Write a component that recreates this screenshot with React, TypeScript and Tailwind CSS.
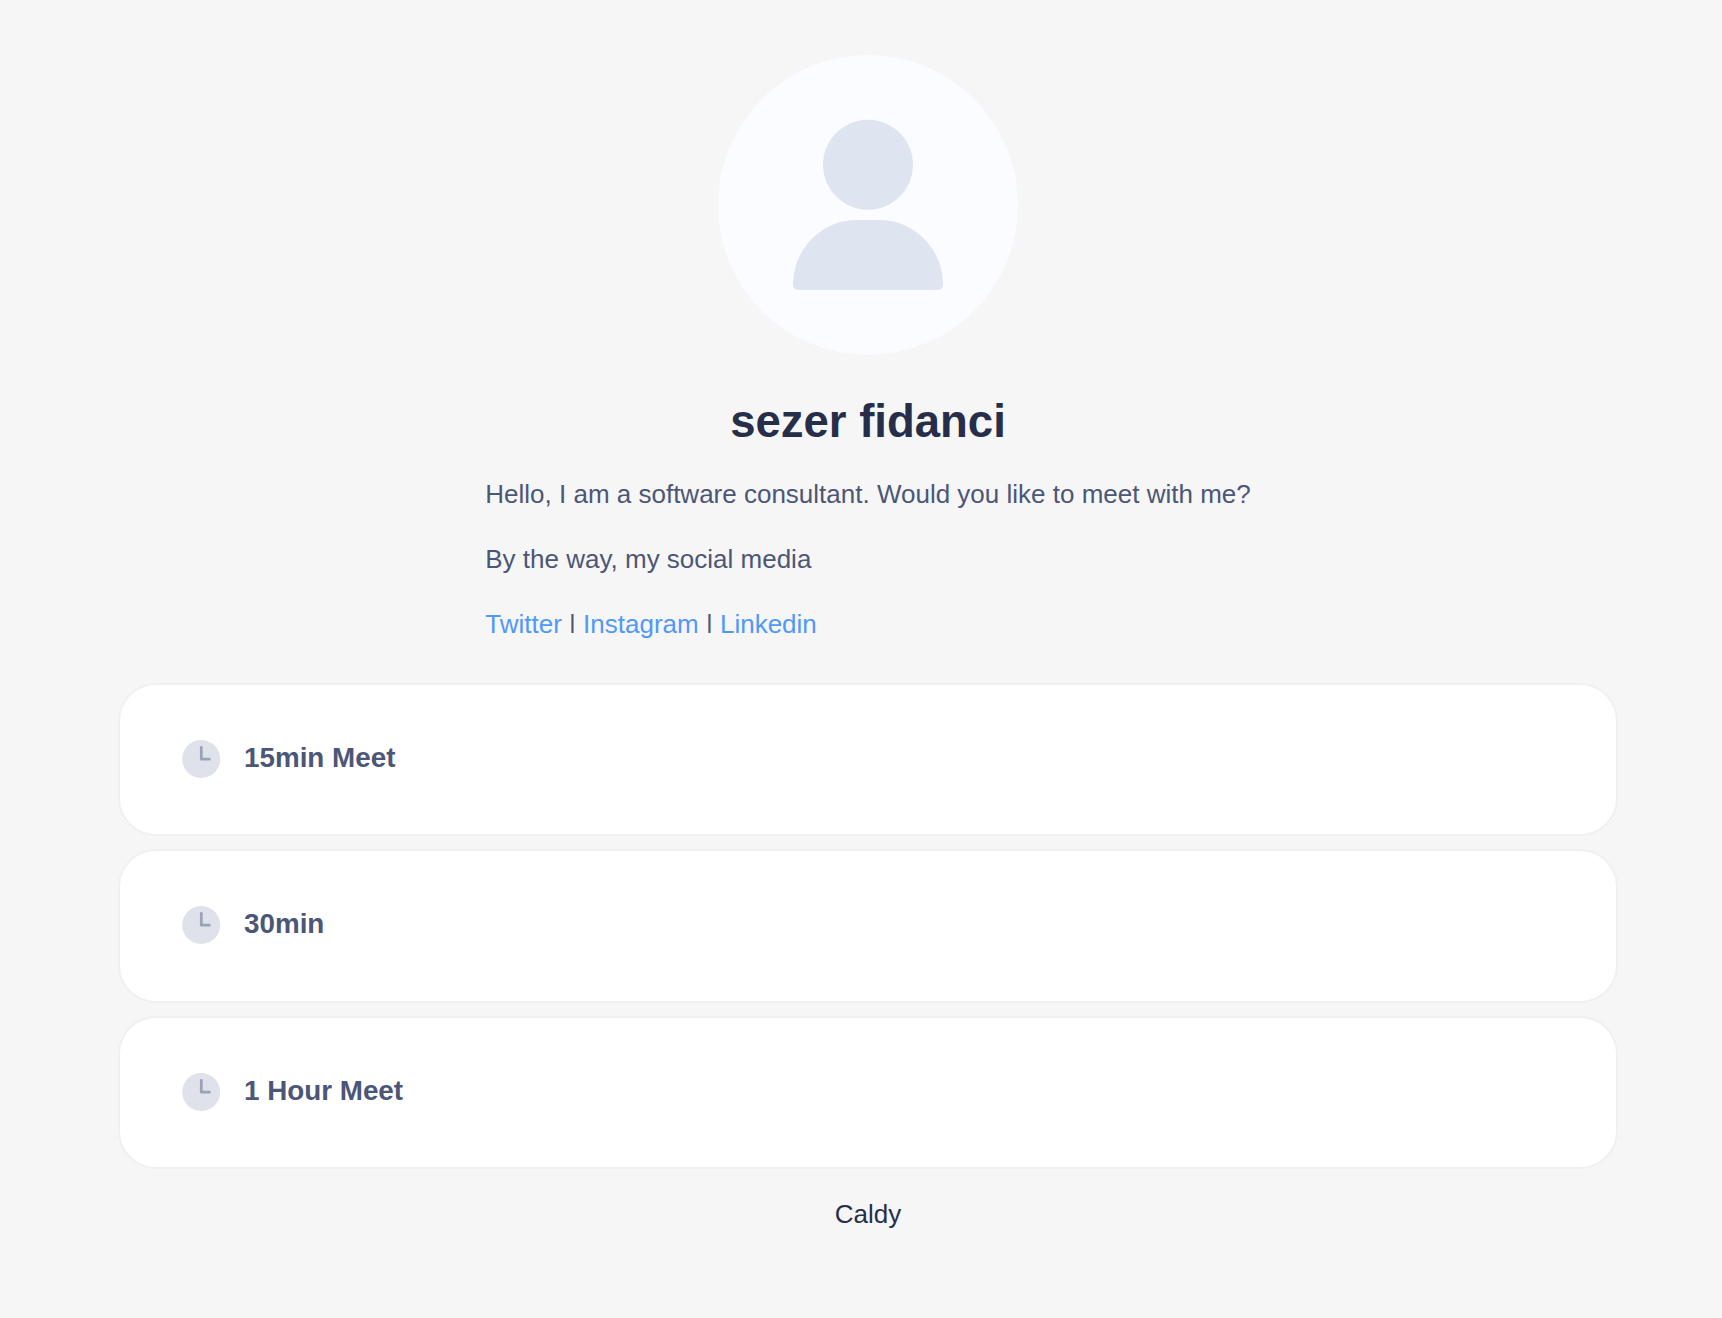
const meetings = [
  { id: 1, title: '15min Meet' },
  { id: 2, title: '30min' },
  { id: 3, title: '1 Hour Meet' },
];

const Avatar = () => {
  return (
    <svg width="300" height="300" viewBox="0 0 300 300" className="block">
      <circle cx="150" cy="150" r="150" fill="#fafcff" />
      <circle cx="150" cy="109.800" r="45" fill="#dee4f0" />
      <path
        d="M75 230C75 193.500 104.500 165 138 165H162C195.500 165 225 193.500 225 230A5 5 0 0 1 220 235H80A5 5 0 0 1 75 230Z"
        fill="#dee4f0"
      />
    </svg>
  );
};

const ClockIcon = () => {
  return (
    <svg width="38" height="38" viewBox="0 0 38 38" className="block shrink-0 overflow-visible">
      <circle cx="19.200" cy="19" r="19" fill="#dfe2ea" />
      <path
        d="M19.300 7.400V19.200H27.300"
        fill="none"
        stroke="#9ba2b7"
        strokeWidth="2.800"
        strokeLinecap="round"
        strokeLinejoin="round"
      />
    </svg>
  );
};

// the bar only spans the cap height
const Separator = () => {
  return <span className="inline-block [clip-path:inset(6px_0_7px_0)]">|</span>;
};

const MeetingCard = ({ title }: { title: string }) => {
  return (
    <a
      href="#"
      className="flex items-center w-full h-[153.2px] pl-[62px] pb-[1.4px] gap-6 bg-white border-2 border-[#f0f0f0] rounded-[38px]"
    >
      <ClockIcon />
      <p className="text-[27.8px] leading-[38px] font-bold text-[#4c5676] pb-[2.2px]">{title}</p>
    </a>
  );
};

export default function App() {
  return (
    <div className="min-h-[1318px] bg-[#f6f6f6] font-['Liberation_Sans',Arial,sans-serif] overflow-hidden">
      <div className="w-[1500px] ml-[118px] pt-[55px] flex flex-col items-center">
        <Avatar />
        <h1 className="mt-[36px] text-[45.5px] leading-[61px] font-bold text-[#272e49]">sezer fidanci</h1>
        <div className="mt-[26px] flex flex-col gap-[33px] text-[26px] leading-[32px] text-[#4c5676]">
          <p>Hello, I am a software consultant. Would you like to meet with me?</p>
          <p>By the way, my social media</p>
          <p>
            <a href="#" className="text-[#5199f8]">Twitter</a> <Separator />{' '}
            <a href="#" className="text-[#5199f8]">Instagram</a> <Separator />{' '}
            <a href="#" className="text-[#5199f8]">Linkedin</a>
          </p>
        </div>
        <div className="mt-[43px] w-full flex flex-col gap-[13.2px]">
          {meetings.map((meeting) => (
            <MeetingCard key={meeting.id} title={meeting.title} />
          ))}
        </div>
        <a href="#" className="mt-[29px] text-[26px] leading-[32px] text-[#272e49]">
          Caldy
        </a>
      </div>
    </div>
  );
}
